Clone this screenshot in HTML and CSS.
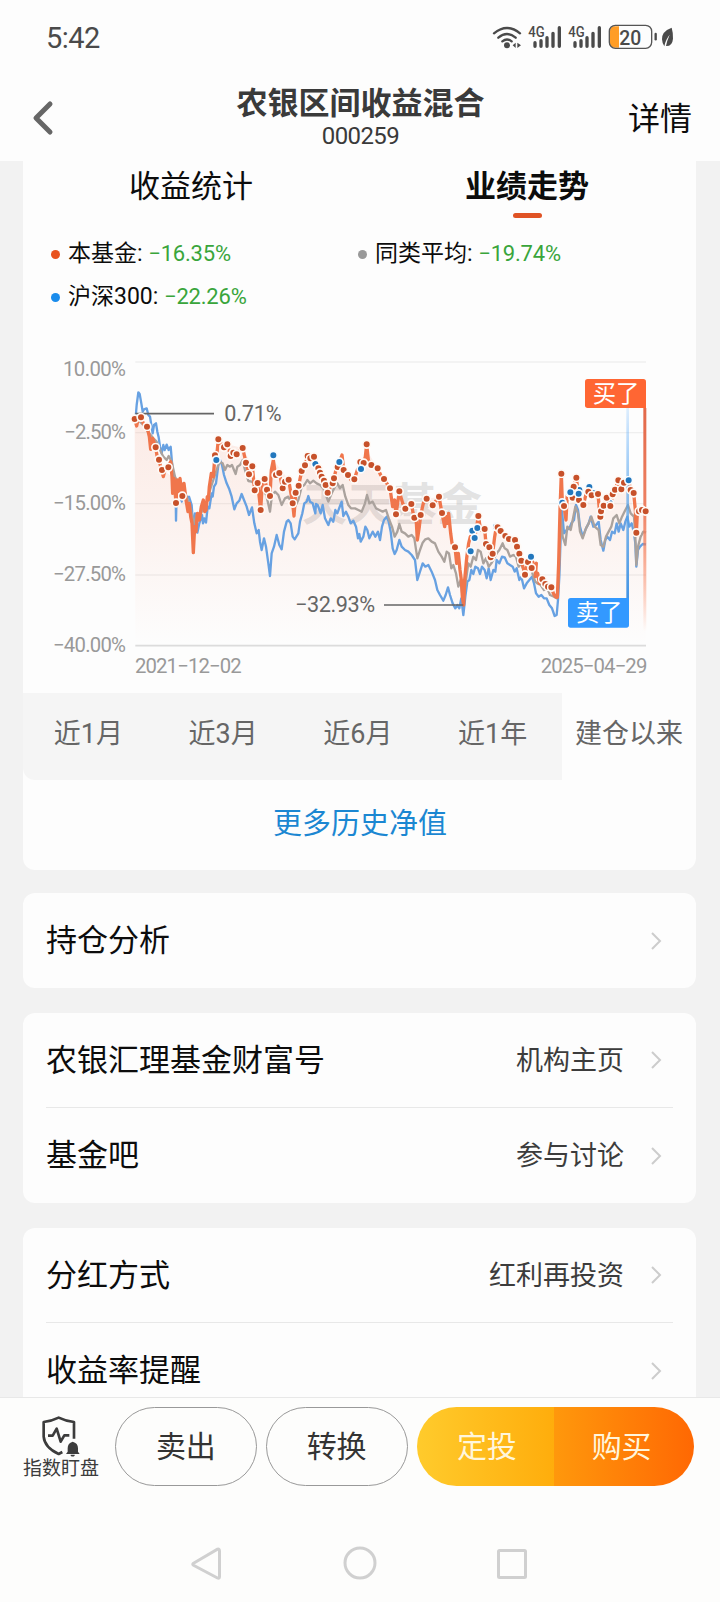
FILE: index.html
```
<!DOCTYPE html>
<html lang="zh-CN">
<head>
    <meta charset="UTF-8">
    <meta name="viewport" content="width=device-width, initial-scale=1.0">
    <title>农银区间收益混合</title>
    <link rel="stylesheet" href="styles.css">
</head>
<body>
    <div class="status-bar">
        <span class="time">5:42</span>
        <!-- wifi / signal / battery -->
        <svg class="status-icons" width="184" height="28" viewBox="0 0 552 84">
            <g fill="none" stroke="#4a4a4a" stroke-width="7" stroke-linecap="round">
                <path d="M12 34Q51 2 90 34M25 47Q51 25 77 47M37 58Q51 47 65 58"/>
            </g>
            <circle cx="51" cy="70" r="9" fill="#4a4a4a"/>
            <path d="M68 70l9-8v16zM82 62l11 8-11 8z" fill="#4a4a4a"/>
            <g stroke="#4a4a4a" stroke-width="10" stroke-linecap="round">
                <path d="M135 62V73M153 56V73M171 47V73M189 34V73M208 17V73"/>
                <path d="M255 62V73M273 56V73M291 47V73M309 34V73M328 17V73"/>
            </g>
            <text class="net" x="115" y="44" textLength="49" lengthAdjust="spacingAndGlyphs">4G</text>
            <text class="net" x="235" y="44" textLength="49" lengthAdjust="spacingAndGlyphs">4G</text>
            <path d="M387 13H374Q360 13 360 27V63Q360 77 374 77H387Z" fill="#ff9d26"/>
            <rect x="358" y="10" width="127" height="69" rx="18" fill="none" stroke="#555" stroke-width="4"/>
            <path d="M497 36V52" stroke="#4a4a4a" stroke-width="7" stroke-linecap="round"/>
            <text class="level" x="388" y="68" textLength="66" lengthAdjust="spacingAndGlyphs">20</text>
            <path d="M545 17Q515 28 516 52Q517 66 523 73Q526 54 539 38Q531 56 528 72Q547 73 549 50Q550 34 545 17Z" fill="#4a4a4a"/>
        </svg>
    </div>
    <header class="header">
        <svg class="back" width="22" height="36" viewBox="0 0 22 36"><path d="M18 4L4 18L18 32" fill="none" stroke="#666" stroke-width="5" stroke-linecap="round" stroke-linejoin="round"/></svg>
        <div class="title">
            <h1>农银区间收益混合</h1>
            <p>000259</p>
        </div>
        <span class="detail">详情</span>
    </header>

    <main class="content">
        <section class="card first">
            <div class="tabs">
                <div class="tab">收益统计</div>
                <div class="tab active">业绩走势</div>
            </div>
            <div class="legend">
                <div class="legend-item"><i class="dot red"></i>本基金: <b>−16.35%</b></div>
                <div class="legend-item"><i class="dot gray"></i>同类平均: <b>−19.74%</b></div>
                <div class="legend-item"><i class="dot blue"></i>沪深300: <b>−22.26%</b></div>
            </div>
            <svg class="chart" width="673" height="353" viewBox="-51 -30 2019 1059">
                <defs>
                    <linearGradient id="area" gradientUnits="userSpaceOnUse" x1="0" y1="200" x2="0" y2="887">
                        <stop offset="0" stop-color="#f0673c" stop-opacity="0.12"/>
                        <stop offset="0.5" stop-color="#f0673c" stop-opacity="0.07"/>
                        <stop offset="1" stop-color="#f0673c" stop-opacity="0"/>
                    </linearGradient>
                    <linearGradient id="buyLine" x1="0" y1="0" x2="0" y2="1">
                        <stop offset="0" stop-color="#e3694a"/>
                        <stop offset="0.45" stop-color="#ee8264"/>
                        <stop offset="1" stop-color="#ff6633" stop-opacity="0"/>
                    </linearGradient>
                    <linearGradient id="sellLine" x1="0" y1="0" x2="0" y2="1">
                        <stop offset="0" stop-color="#3399ff" stop-opacity="0.15"/>
                        <stop offset="0.4" stop-color="#5aa5ea" stop-opacity="0.65"/>
                        <stop offset="1" stop-color="#4394e4"/>
                    </linearGradient>
                    <marker id="redDot" markerUnits="userSpaceOnUse" markerWidth="28" markerHeight="28" refX="14" refY="14"><circle cx="14" cy="14" r="11.500" fill="#c7512a" stroke="#fffaf6" stroke-width="5"/></marker>
                    <marker id="blueDot" markerUnits="userSpaceOnUse" markerWidth="28" markerHeight="28" refX="14" refY="14"><circle cx="14" cy="14" r="11.500" fill="#2277bd" stroke="#f8fcff" stroke-width="5"/></marker>
                </defs>

                <path class="grid" d="M286 36H1818M286 248H1818M286 461H1818M286 675H1818"/>
                <path class="grid base" d="M286 887H1818"/>
                <text class="watermark" x="786" y="512" textLength="540">天天基金</text>

                <path fill="url(#area)" d="M284 207L303 202L321 230L347 292L370 360L396 380L408 430L432 420L460 570L490 470L514 390L535 268L562 283L608 294L637 349L662 460L700 330L746 389L762 480L785 363L804 315L822 320L863 428L898 336L943 388L980 300L1032 387L1068 480L1078 424L1132 520L1160 446L1197 440L1226 520L1271 765L1286 610L1315 498L1352 628L1370 525L1425 570L1455 674L1482 650L1534 712L1552 742L1564 371L1578 510L1609 383L1630 465L1674 432L1683 484L1735 391L1766 391L1789 548L1800 482L1817 484V887H286Z"/>

                <polyline class="line blue-line" points="286,215 290,165 295,127 299,132 304,160 308,185 312,178 320,175 325,195 330,200 338,250 342,225 348,220 352,245 356,262 360,290 365,310 370,285 374,300 380,284 386,300 392,290 397,350 400,380 403,400 407,430 408,512 410,430 418,410 425,455 430,425 440,445 447,440 455,465 460,540 465,490 472,548 478,520 486,495 489,520 493,505 498,518 503,470 508,475 515,430 518,440 522,410 528,400 535,345 540,330 546,345 552,375 560,400 568,418 575,440 583,478 590,460 598,452 605,432 612,450 620,470 627,495 636,472 643,520 650,550 656,540 660,575 665,600 672,565 678,590 685,640 690,678 695,610 702,590 710,555 718,585 725,598 732,545 740,515 745,510 752,520 758,560 764,568 775,550 780,515 787,490 793,460 800,455 805,438 810,455 818,460 826,490 828,462 833,465 842,490 848,465 855,505 865,525 872,505 880,515 886,480 892,490 900,468 905,455 910,498 918,485 925,500 932,520 940,512 948,530 954,565 958,552 962,575 970,560 976,530 982,540 988,565 998,545 1006,560 1014,545 1020,570 1026,530 1032,510 1040,500 1046,515 1052,545 1058,595 1064,612 1070,600 1078,570 1085,590 1095,600 1105,605 1115,615 1125,630 1132,690 1140,665 1148,640 1156,650 1165,645 1175,665 1185,690 1192,720 1200,735 1210,752 1217,735 1224,712 1230,735 1238,760 1246,775 1252,765 1258,775 1264,745 1270,795 1276,740 1282,695 1288,690 1294,660 1300,672 1306,650 1314,655 1320,672 1326,650 1334,660 1340,685 1346,655 1352,690 1360,660 1366,665 1370,630 1378,640 1386,620 1394,622 1402,640 1410,645 1418,650 1424,665 1430,655 1438,690 1444,680 1452,715 1460,700 1468,690 1476,680 1482,700 1488,730 1496,740 1504,735 1512,745 1520,745 1528,765 1536,775 1544,798 1550,795 1554,750 1558,680 1562,560 1566,480 1572,550 1580,540 1588,535 1594,520 1602,510 1608,465 1614,480 1620,530 1628,560 1638,535 1646,520 1652,500 1660,530 1668,525 1676,515 1682,570 1690,602 1696,570 1702,560 1710,570 1716,545 1724,550 1730,520 1736,545 1742,520 1750,540 1756,515 1762,500 1768,530 1775,520 1782,550 1786,580 1789,650 1794,600 1800,590 1808,582 1818,583"/>
                <polyline class="line gray-line" points="286,210 300,215 310,225 320,240 332,255 340,265 350,275 360,300 370,320 380,330 386,318 395,335 405,380 415,400 425,400 440,440 450,470 462,520 470,495 480,500 490,470 500,460 510,420 520,390 530,360 538,335 548,340 555,360 562,345 570,350 576,345 582,360 587,372 592,350 600,345 608,330 615,360 625,393 635,395 645,400 655,420 660,430 670,415 680,440 690,485 696,435 705,425 715,435 725,465 735,445 745,440 755,460 765,470 775,450 785,410 793,405 802,390 810,400 820,392 830,400 840,405 850,415 865,455 875,430 885,410 892,400 900,415 908,405 916,440 925,465 933,475 945,475 955,480 965,485 975,460 981,435 988,460 998,455 1008,475 1018,480 1028,485 1038,480 1048,510 1056,530 1064,560 1072,545 1078,522 1085,545 1095,550 1105,560 1115,555 1123,565 1132,625 1140,600 1148,578 1156,568 1165,565 1175,575 1185,580 1195,605 1205,620 1213,635 1220,605 1227,610 1234,655 1240,645 1248,670 1255,710 1262,690 1270,760 1278,690 1285,640 1292,650 1300,620 1308,630 1314,600 1322,605 1330,640 1338,625 1346,650 1354,640 1362,625 1370,610 1378,600 1388,580 1394,595 1402,600 1410,620 1420,615 1428,620 1436,650 1444,640 1452,665 1464,640 1472,650 1480,680 1486,695 1492,700 1502,705 1512,720 1522,715 1530,735 1542,740 1550,745 1556,700 1562,500 1568,560 1576,585 1582,530 1592,540 1600,500 1606,470 1614,490 1620,545 1628,565 1638,535 1646,520 1654,500 1664,530 1676,540 1682,585 1690,590 1698,560 1706,545 1714,530 1720,505 1730,495 1738,520 1746,500 1756,480 1764,465 1772,490 1782,500 1786,560 1789,645 1794,590 1802,560 1810,545 1818,548"/>
                <polyline class="line red-line" points="284,207 290,228 296,200 303,202 312,225 321,230 328,260 332,298 338,265 347,292 353,330 357,329 363,355 370,380 376,355 385,350 392,335 396,380 398,430 402,385 408,459 412,390 416,425 420,385 426,438 432,400 438,450 444,485 448,460 452,500 456,520 460,608 464,530 468,545 472,490 478,510 484,470 490,450 494,485 498,480 502,440 505,450 508,410 514,370 520,380 525,315 529,330 535,268 545,285 552,292 562,283 572,318 580,310 590,313 600,300 608,294 618,338 627,373 637,349 644,421 653,399 662,480 667,400 674,387 681,419 690,438 694,360 700,330 706,372 718,369 728,415 735,395 746,389 752,425 758,460 762,498 767,428 776,407 785,363 795,345 804,315 812,320 822,320 828,345 835,355 843,378 852,398 863,428 873,405 882,385 890,350 898,336 906,315 911,360 924,375 933,390 943,388 952,360 963,345 971,340 976,320 980,283 985,330 994,345 1013,355 1022,375 1032,387 1050,415 1058,470 1064,450 1068,493 1078,424 1088,460 1096,476 1114,462 1122,503 1128,500 1132,570 1138,530 1142,495 1150,460 1160,446 1178,466 1197,440 1206,490 1214,530 1218,500 1222,520 1226,490 1232,550 1236,580 1245,592 1250,640 1255,610 1260,660 1264,690 1267,740 1271,765 1274,690 1280,625 1286,580 1291,560 1304,563 1310,530 1315,498 1322,540 1334,537 1338,582 1348,592 1352,628 1358,610 1364,560 1370,525 1382,543 1394,555 1407,567 1425,570 1431,590 1438,611 1444,632 1455,674 1464,636 1473,650 1478,635 1483,655 1489,640 1486,680 1493,670 1498,700 1506,688 1516,702 1522,710 1534,712 1540,730 1546,740 1552,742 1556,640 1560,480 1564,371 1567,460 1572,468 1578,510 1582,430 1590,440 1598,443 1601,410 1609,383 1617,450 1630,465 1640,425 1646,425 1660,432 1674,432 1680,500 1683,484 1691,467 1700,443 1711,468 1718,433 1725,419 1735,391 1744,418 1752,400 1766,391 1772,420 1781,429 1786,480 1789,548 1792,490 1800,482 1817,484"/>

                <!-- 极值标注 -->
                <path class="callout" d="M286 191H522M1032 765H1270"/>
                <text class="label" x="553" y="212" textLength="172">0.71%</text>
                <text class="label" x="765" y="786" textLength="240">−32.93%</text>

                <!-- 买卖竖线 -->
                <rect x="1810" y="174" width="9" height="670" fill="url(#buyLine)"/>
                <rect x="1759" y="174" width="8" height="572" fill="url(#sellLine)"/>

                <polyline class="dots blue-dots" points="826,342 1297,542 1312,534 1368,530 1567,458 1588,428 1618,420 1648,411 1661,430 1709,459"/>
                <polyline class="dots red-dots" points="284,207 303,202 321,230 347,292 357,329 366,360 385,352 408,459 427,438 525,316 535,268 552,292 562,283 572,318 580,308 590,313 608,294 618,338 627,373 637,349 644,421 653,399 662,480 674,387 681,419 690,438 708,375 718,369 728,415 735,395 746,389 758,460 767,428 776,407 785,363 795,346 803,318 811,325 822,320 835,355 840,368 845,380 852,392 857,405 863,428 878,400 882,385 893,351 911,360 924,375 943,388 961,336 971,339 980,283 994,345 1013,355 1032,387 1050,415 1068,493 1078,424 1096,476 1114,462 1123,503 1142,495 1160,446 1178,466 1197,440 1206,489 1245,592 1315,498 1334,537 1338,582 1348,592 1352,622 1358,611 1373,532 1382,543 1396,558 1407,567 1425,570 1431,590 1438,611 1444,632 1455,674 1464,636 1475,654 1507,688 1516,702 1524,710 1534,712 1564,371 1572,468 1598,443 1601,410 1609,383 1617,450 1630,465 1645,425 1655,436 1674,432 1681,500 1683,484 1691,467 1700,443 1711,468 1718,433 1725,419 1735,391 1744,418 1752,398 1772,420 1781,429 1789,548 1797,484 1806,480 1817,484"/>
                <polyline class="dots blue-dots" points="529,330 700,316 898,336 963,357 1292,604 1304,564 1473,620 1591,427 1616,431 1766,391"/>

                <path fill="#ff6633" d="M1643 87H1810Q1818 87 1818 95V174H1643Q1635 174 1635 166V95Q1635 87 1643 87Z"/>
                <text class="flag" x="1658" y="155" textLength="140">买了</text>
                <path fill="#3399ff" d="M1592 744H1767V825Q1767 833 1759 833H1592Q1584 833 1584 825V752Q1584 744 1592 744Z"/>
                <text class="flag" x="1607" y="813" textLength="140">卖了</text>

                <g class="axis" text-anchor="end">
                    <text x="258" y="78" textLength="189">10.00%</text>
                    <text x="258" y="266" textLength="185">−2.50%</text>
                    <text x="258" y="480" textLength="219">−15.00%</text>
                    <text x="258" y="692" textLength="219">−27.50%</text>
                    <text x="258" y="905" textLength="219">−40.00%</text>
                </g>
                <g class="axis">
                    <text x="285" y="968" textLength="320">2021−12−02</text>
                    <text x="1502" y="968" textLength="320">2025−04−29</text>
                </g>
            </svg>
            <div class="periods">
                <span>近1月</span>
                <span>近3月</span>
                <span>近6月</span>
                <span>近1年</span>
                <span class="active">建仓以来</span>
            </div>
            <a class="more">更多历史净值</a>
        </section>

        <section class="card">
            <div class="row"><span>持仓分析</span><svg class="arrow" viewBox="0 0 12 20"><path d="M2 2l8 8-8 8"/></svg></div>
        </section>

        <section class="card">
            <div class="row"><span>农银汇理基金财富号</span><em>机构主页</em><svg class="arrow" viewBox="0 0 12 20"><path d="M2 2l8 8-8 8"/></svg></div>
            <div class="row"><span>基金吧</span><em>参与讨论</em><svg class="arrow" viewBox="0 0 12 20"><path d="M2 2l8 8-8 8"/></svg></div>
        </section>

        <section class="card">
            <div class="row"><span>分红方式</span><em>红利再投资</em><svg class="arrow" viewBox="0 0 12 20"><path d="M2 2l8 8-8 8"/></svg></div>
            <div class="row"><span>收益率提醒</span><svg class="arrow" viewBox="0 0 12 20"><path d="M2 2l8 8-8 8"/></svg></div>
        </section>
    </main>

    <footer class="footer">
        <div class="actions">
            <div class="watch">
                <svg width="38" height="41" viewBox="128 110 114 123">
                    <g fill="none" stroke="#3c3c3c" stroke-width="8" stroke-linejoin="round">
                        <path d="M224 178V128Q198 125 178 115Q158 125 133 128V172Q136 205 178 224L189 218"/>
                        <path d="M146 169H160L172 148L184 187L195 168H210"/>
                    </g>
                    <path d="M220 187Q236 191 236 207V217L241 224H200L205 217V207Q205 191 220 187Z" fill="#3c3c3c"/>
                    <path d="M214 226h12v3q-6 5-12 0z" fill="#3c3c3c"/>
                </svg>
                <span>指数盯盘</span>
            </div>
            <button class="btn">卖出</button>
            <button class="btn">转换</button>
            <div class="buy-group">
                <button class="plan">定投</button>
                <button class="buy">购买</button>
            </div>
        </div>
        <div class="nav">
            <svg width="34" height="38" viewBox="2 0 34 38"><path d="M4.500 18.300L28.500 4.200Q30.500 3.500 30.500 6V31.500Q30.500 34 28.500 33L4.500 20.200Q3 19.300 4.500 18.300Z"/></svg>
            <svg width="34" height="38" viewBox="0 0 34 38"><circle cx="17" cy="18" r="15"/></svg>
            <svg width="34" height="38" viewBox="0 0 34 38"><rect x="3.500" y="5.500" width="27" height="27" rx="1"/></svg>
        </div>
    </footer>
</body>
</html>
```
FILE: styles.css
```
* { box-sizing: border-box; margin: 0; padding: 0; }
body { width: 720px; height: 1602px; overflow: hidden; background: #f2f2f2; color: #0c0c0c; font-family: Roboto, "Noto Sans CJK SC", sans-serif; }

/* 顶部 */
.status-bar { display: flex; justify-content: space-between; align-items: center; height: 75px; padding: 0 45px 0 46px; background: #fdfdfd; }
.time { font-size: 29px; color: #4a4a4a; letter-spacing: -0.5px; }
.status-icons { margin-right: 1px; margin-bottom: 3px; }
.net { font-size: 42px; font-weight: 500; fill: #4a4a4a; }
.level { font-size: 63px; font-weight: 500; fill: #4a4a4a; }
.header { display: flex; align-items: center; height: 86px; padding: 0 28px 0 32px; background: #fdfdfd; }
.back { margin-right: 39px; }
.title { flex: 1; text-align: center; color: #3a3a3a; }
.title h1 { font-size: 31px; line-height: 36px; font-weight: 700; }
.title p { font-size: 24px; line-height: 28px; letter-spacing: -0.6px; }
.detail { padding-bottom: 5px; font-size: 32px; }

/* 卡片 */
.content { height: 1236px; overflow: hidden; padding: 0 24px 0 23px; }
.card { margin-bottom: 25px; border-radius: 12px; background: #fdfdfd; }
.card.first { height: 709px; margin-bottom: 23px; border-radius: 0 0 12px 12px; }
.tabs { display: flex; height: 61px; padding-right: 1px; }
.tab { flex: 1; text-align: center; font-size: 31px; line-height: 52px; }
.tab.active { font-weight: 700; }
.tab.active::after { content: ""; display: block; width: 29px; height: 5px; margin: 0 auto; border-radius: 3px; background: #e05325; }
.legend { display: grid; grid-template-columns: 307px 1fr; grid-auto-rows: 43px; height: 118px; padding: 10px 0 0 28px; }
.legend-item { display: flex; align-items: center; font-size: 23px; line-height: 30px; white-space: pre; }
.legend-item b { padding-top: 1px; font-weight: 400; font-size: 22px; letter-spacing: -0.2px; color: #39a53b; }
.dot { width: 9px; height: 9px; margin: 2px 8px 0 0; border-radius: 50%; }
.dot.red { background: #e8531f; }
.dot.gray { background: #999; }
.dot.blue { background: #1a8cec; }

/* 走势图 */
.chart { display: block; }
.grid { fill: none; stroke: #efefef; stroke-width: 4; }
.grid.base { stroke: #dcdcdc; stroke-width: 5; }
.watermark { font-size: 135px; font-weight: 700; fill: #777; fill-opacity: 0.2; }
.line { fill: none; stroke-linejoin: round; }
.blue-line { stroke: #67a1e2; stroke-width: 7; }
.gray-line { stroke: #aaa29d; stroke-width: 7; }
.red-line { stroke: #f0764c; stroke-width: 10; }
.callout { stroke: #666; stroke-width: 5; }
.label { font-size: 65px; fill: #666; }
.axis { font-size: 61px; fill: #999; }
.flag { font-size: 70px; fill: #fff; }
.dots { fill: none; stroke: none; }
.red-dots { marker: url(#redDot); }
.blue-dots { marker: url(#blueDot); }

.periods { display: flex; height: 87px; background: #f5f5f5; border-radius: 0 0 12px 12px; }
.periods span { flex: 1; padding-right: 4px; text-align: center; font-size: 27px; line-height: 82px; color: #666; white-space: nowrap; }
.periods .active { flex: none; width: 134px; padding-right: 0; background: #fdfdfd; }
.more { display: block; padding-left: 1px; text-align: center; font-size: 29px; line-height: 88px; color: #1b87d2; }

.row { display: flex; align-items: center; height: 95px; margin: 0 23px; padding-right: 11px; font-size: 31px; }
.row:not(:last-child) { height: 94px; }
.row + .row { height: 96px; border-top: 1px solid #e8e8e8; }
.row span { flex: 1; padding-bottom: 6px; }
.row em { margin-right: 26px; padding-bottom: 4px; font-style: normal; font-size: 27px; color: #3c3c3c; }
.arrow { width: 12px; height: 20px; fill: none; stroke: #ccc; stroke-width: 2; }

/* 底部 */
.footer { height: 205px; border-top: 1px solid #e8e8e8; background: #fdfdfc; }
.actions { display: flex; height: 88px; padding: 9px 26px 0 23px; }
.watch { display: flex; flex-direction: column; align-items: center; width: 76px; margin-right: 16px; padding-top: 9px; font-size: 19px; line-height: 24px; color: #3c3c3c; white-space: nowrap; }
button { padding-bottom: 6px; border: none; background: none; font: inherit; font-size: 30px; cursor: pointer; }
.btn { width: 142px; height: 79px; margin-right: 9px; border: 1px solid #999; border-radius: 40px; color: #333; }
.buy-group { display: flex; width: 278px; height: 79px; border-radius: 40px; overflow: hidden; }
.buy-group button { flex: 1; color: #fff6dc; }
.buy-group .plan { padding-left: 3px; background: linear-gradient(90deg, #ffcb2c, #ffad0c); }
.buy-group .buy { padding-right: 5px; background: linear-gradient(90deg, #ff980c, #ff6803); }
.nav { display: flex; justify-content: center; gap: 118px; margin-top: 59px; }
.nav svg { fill: none; stroke: #d0d0d0; stroke-width: 3; }
```
